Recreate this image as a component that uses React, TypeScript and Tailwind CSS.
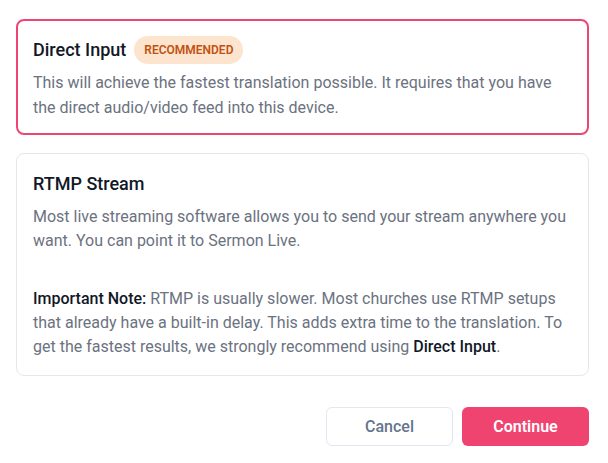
export default function App() {
  return (
    <div className="min-h-[463px] w-[608px] bg-white px-4 pt-[19px] font-['Roboto',sans-serif]">
      <div className="w-[573px]">
        <div className="rounded-lg border-2 border-[#ee4673] px-[15px] pb-[13px] pt-[15px]">
          <div className="flex items-center gap-2">
            <h2 className="text-lg font-medium leading-7 text-[#111827]">Direct Input</h2>
            <span className="flex h-7 items-center rounded-full bg-[#fde4cf] px-2.5 text-xs font-semibold uppercase text-[#c2510f]">
              Recommended
            </span>
          </div>
          <p className="mt-1.5 text-base leading-[25px] text-[#6b7280]">
            This will achieve the fastest translation possible. It requires that you have the direct audio/video feed into
            this device.
          </p>
        </div>

        <div className="mt-[18px] rounded-lg border border-[#e5e7eb] px-4 pb-4 pt-4">
          <h2 className="text-lg font-medium leading-7 text-[#111827]">RTMP Stream</h2>
          <p className="mt-[7px] text-base leading-6 text-[#6b7280]">
            Most live streaming software allows you to send your stream anywhere you want. You can point it to Sermon
            Live.
          </p>
          <p className="mt-[34px] text-base leading-6 text-[#6b7280]">
            <span className="font-medium text-[#111827]">Important Note:</span> RTMP is usually slower. Most churches use
            RTMP setups that already have a built-in delay. This adds extra time to the translation. To get the fastest
            results, we strongly recommend using <span className="font-medium text-[#111827]">Direct Input</span>.
          </p>
        </div>

        <div className="mt-[31px] flex justify-end gap-[9px]">
          <button className="h-[39px] w-[127px] rounded-md border border-[#e2e8f0] bg-white text-base font-medium text-[#64748b]">
            Cancel
          </button>
          <button className="h-[39px] w-[127px] rounded-md bg-[#ef4470] text-base font-semibold text-white">
            Continue
          </button>
        </div>
      </div>
    </div>
  );
}
